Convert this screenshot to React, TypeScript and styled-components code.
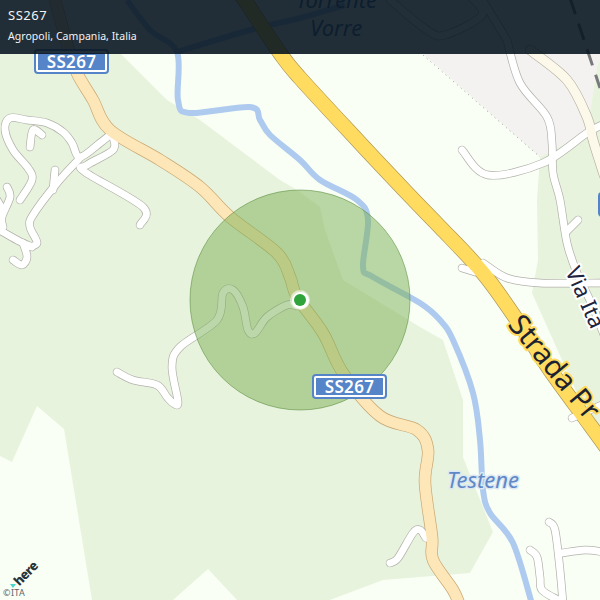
import React from 'react'
import styled, { createGlobalStyle } from 'styled-components'

type Pt = [number, number]

const GlobalStyle = createGlobalStyle`
  html, body {
    margin: 0;
    padding: 0;
    background: #f9fff5;
  }
`

const Viewport = styled.div`
  position: relative;
  width: 600px;
  height: 600px;
  overflow: hidden;
  background: #f9fff5;
  font-family: "Noto Sans", "Liberation Sans", sans-serif;
`

const MapCanvas = styled.svg`
  position: absolute;
  inset: 0;
  display: block;
`

const Casing = styled.path<{ $w: number; $color?: string }>`
  fill: none;
  stroke: ${p => p.$color || '#b2b1ab'};
  stroke-width: ${p => p.$w + 1.4}px;
  stroke-linecap: round;
  stroke-linejoin: round;
`

const Fill = styled.path<{ $w: number; $color?: string }>`
  fill: none;
  stroke: ${p => p.$color || '#ffffff'};
  stroke-width: ${p => p.$w}px;
  stroke-linecap: round;
  stroke-linejoin: round;
`

const Land = styled.polygon<{ $color: string }>`
  fill: ${p => p.$color};
`

const River = styled.path`
  fill: none;
  stroke: #aecbef;
  stroke-width: 6px;
  stroke-linejoin: round;
`

const Rail = styled.path`
  fill: none;
  stroke: #77797a;
  stroke-width: 3px;
  stroke-dasharray: 17 10;
`

const AreaEdge = styled.path`
  fill: none;
  stroke: #9a9a98;
  stroke-width: 1px;
  stroke-dasharray: 1 4;
`

const Radius = styled.circle`
  fill: rgba(122, 176, 84, 0.5);
  stroke: rgba(88, 138, 60, 0.55);
  stroke-width: 1px;
`

const RoadLabel = styled.text<{ $size: number; $halo: string; $color: string }>`
  font-family: "Noto Sans", "Liberation Sans", sans-serif;
  font-size: ${p => p.$size}px;
  fill: ${p => p.$color};
  stroke: ${p => p.$halo};
  stroke-width: 4px;
  stroke-linejoin: round;
  paint-order: stroke;
`

const WaterLabel = styled.text<{ $color: string; $halo: string }>`
  font-family: "Noto Sans", "Liberation Sans", sans-serif;
  font-size: 22px;
  font-style: italic;
  fill: ${p => p.$color};
  stroke: ${p => p.$halo};
  stroke-width: 3px;
  stroke-linejoin: round;
  paint-order: stroke;
`

const Shield = styled.div<{ $x: number; $y: number }>`
  position: absolute;
  left: ${p => p.$x}px;
  top: ${p => p.$y}px;
  width: 75px;
  height: 25px;
  box-sizing: border-box;
  padding: 2px;
  background: #5585c8;
  border-radius: 4px;
`

const ShieldInner = styled.div`
  height: 100%;
  box-sizing: border-box;
  border: 2px solid #ffffff;
  border-radius: 2px;
  background: #5585c8;
  color: #ffffff;
  display: flex;
  align-items: center;
  justify-content: center;
  font-size: 17px;
  font-weight: 600;
  letter-spacing: 0.3px;
`

const Marker = styled.div`
  position: absolute;
  left: 290px;
  top: 290px;
  width: 20px;
  height: 20px;
  border-radius: 50%;
  background: rgba(255, 255, 255, 0.55);
  display: flex;
  align-items: center;
  justify-content: center;
`

const MarkerRing = styled.div`
  width: 17px;
  height: 17px;
  border-radius: 50%;
  background: #ffffff;
  display: flex;
  align-items: center;
  justify-content: center;
`

const MarkerDot = styled.div`
  width: 12px;
  height: 12px;
  border-radius: 50%;
  background: #2ea43a;
`

const Header = styled.header`
  position: absolute;
  left: 0;
  top: 0;
  right: 0;
  height: 54px;
  box-sizing: border-box;
  padding: 6px 8px 0;
  background: rgba(7, 20, 31, 0.89);
  color: #f2f4f5;
  display: flex;
  flex-direction: column;
  gap: 5px;
`

const Title = styled.div`
  font-size: 13px;
  line-height: 18px;
  letter-spacing: 0.5px;
`

const Subtitle = styled.div`
  font-size: 10.5px;
  line-height: 14px;
  letter-spacing: 0.05px;
`

const Attribution = styled.div`
  position: absolute;
  left: 3px;
  bottom: 2px;
  display: flex;
  flex-direction: column;
  align-items: flex-start;
`

const HereLogo = styled.div`
  position: relative;
  margin: 0 0 0 8px;
  height: 22px;
  width: 26px;
`

const HereMark = styled.span`
  position: absolute;
  left: -1px;
  bottom: 0;
  width: 0;
  height: 0;
  border-left: 3px solid transparent;
  border-right: 3px solid transparent;
  border-top: 4px solid #48d8c8;
`

const HereWord = styled.span`
  position: absolute;
  left: 1px;
  top: 0;
  font-size: 13px;
  line-height: 15px;
  font-weight: 800;
  letter-spacing: -0.6px;
  color: #26343a;
  transform: rotate(-45deg);
`

const Copyright = styled.div`
  font-size: 9px;
  line-height: 10px;
  letter-spacing: 0.4px;
  color: #5c6468;
`

// catmull-rom through the points, so roads bend instead of kinking
const smooth = (pts: Pt[]) => {
  let d = `M${pts[0][0]} ${pts[0][1]}`
  for (let i = 0; i < pts.length - 1; i++) {
    const p0 = pts[Math.max(i - 1, 0)]
    const p1 = pts[i]
    const p2 = pts[i + 1]
    const p3 = pts[Math.min(i + 2, pts.length - 1)]
    const c1x = p1[0] + (p2[0] - p0[0]) / 6
    const c1y = p1[1] + (p2[1] - p0[1]) / 6
    const c2x = p2[0] - (p3[0] - p1[0]) / 6
    const c2y = p2[1] - (p3[1] - p1[1]) / 6
    d += ` C${c1x.toFixed(1)} ${c1y.toFixed(1)} ${c2x.toFixed(1)} ${c2y.toFixed(1)} ${p2[0]} ${p2[1]}`
  }
  return d
}

const minorRoads: Pt[][] = [
  [[20, 200], [32, 180], [28, 168], [13, 150], [5, 130], [10, 118], [27, 120], [47, 123], [63, 132], [72, 143], [80, 157], [100, 143], [110, 135]],
  [[30, 147], [33, 130], [42, 135]],
  [[80, 158], [57, 183], [33, 215], [30, 227], [37, 243], [27, 247]],
  [[55, 170], [53, 190]],
  [[-4, 228], [17, 240], [32, 247]],
  [[23, 243], [27, 257], [22, 265], [13, 260]],
  [[7, 187], [10, 197], [2, 217], [3, 227]],
  [[-3, 200], [3, 210]],
  [[113, 137], [113, 150], [87, 165], [85, 172], [143, 207], [140, 225]],
  [[117, 372], [133, 380], [157, 385], [167, 397], [173, 403], [178, 402], [172, 367], [180, 347], [217, 320], [223, 293], [233, 290], [243, 307], [248, 330], [255, 333], [267, 317], [287, 305], [296, 306]],
  [[507, 40], [520, 83], [547, 117], [552, 143], [553, 173], [560, 200], [567, 243], [577, 273], [593, 307], [607, 343]],
  [[462, 150], [488, 175], [543, 163], [587, 133], [604, 124]],
  [[462, 268], [475, 272]],
  [[483, 263], [507, 278], [540, 283], [604, 283]],
  [[566, 232], [578, 220]],
  [[572, 418], [590, 410], [604, 404]],
  [[390, 563], [398, 558], [413, 533], [420, 530], [426, 538]],
  [[549, 522], [555, 530], [560, 570], [563, 604]],
  [[562, 553], [585, 550], [604, 552]],
  [[530, 550], [537, 557], [540, 577], [542, 590], [558, 600]],
  [[390, 0], [427, 30], [445, 35], [482, 15], [470, -4]],
  [[480, -4], [507, 40]],
]

const cream: Pt[] = [[55, 0], [70, 54], [78, 75], [93, 100], [110, 130], [160, 160], [200, 187], [230, 217], [277, 253], [290, 277], [297, 297], [323, 333], [343, 373], [380, 416], [417, 430], [428, 450], [425, 483], [432, 537], [433, 560], [453, 590], [460, 606]]
const motorway: Pt[] = [[242, -4], [280, 53], [300, 78], [360, 143], [410, 196], [440, 227], [483, 273], [517, 320], [550, 370], [590, 425], [612, 455]]
const secondary: Pt[] = [[530, 50], [567, 80], [587, 117], [593, 140], [604, 175]]

const App = () => {
  return (
    <Viewport>
      <GlobalStyle />
      <MapCanvas width={600} height={600} viewBox="0 0 600 600">
        <Land $color="#f3f2f0" points="423,54 540,157 587,132 597,67 600,60 600,0 423,0" />
        <Land $color="#e8f3dd" points="0,54 120,53 167,100 200,120 280,180 297,190 320,207 325,230 343,280 420,327 443,340 463,400 463,457 493,532 470,573 383,580 330,600 237,600 208,569 173,600 92,600 64,429 37,406 12,462 0,456" />
        <Land $color="#e8f3dd" points="540,157 537,200 538,260 532,293 580,400 600,430 600,60 597,67 587,132" />
        <AreaEdge d="M423 55L540 157" />
        <Rail d="M570 -2L600 88" />

        <River d={smooth([[127, 0], [150, 30], [177, 52], [178, 100], [190, 113], [250, 107], [260, 120], [270, 135], [300, 160], [320, 180], [357, 200], [368, 220], [363, 267], [373, 277], [420, 303], [440, 320], [453, 340], [473, 393], [480, 440], [483, 490], [490, 513], [513, 543], [532, 604]])} />
        <River d={smooth([[177, 52], [250, 30], [300, 18], [345, 5]])} />

        {minorRoads.map((r, i) => <Casing key={i} $w={7} d={smooth(r)} />)}
        <Casing $w={11} $color="#c8a873" d={smooth(cream)} />
        <Casing $w={9} $color="#b8b4a4" d={smooth(secondary)} />
        <Casing $w={14} $color="#b0975a" d={smooth(motorway)} />
        {minorRoads.map((r, i) => <Fill key={i} $w={7} d={smooth(r)} />)}
        <Fill $w={11} $color="#fde6b8" d={smooth(cream)} />
        <Fill $w={9} $color="#fdf9ea" d={smooth(secondary)} />
        <Fill $w={14} $color="#ffdc60" d={smooth(motorway)} />

        <RoadLabel $size={29} $color="#1d2230" $halo="#ffdc60" transform="translate(507 325) rotate(50.5)">Strada Pr</RoadLabel>
        <RoadLabel $size={22} $color="#1c2440" $halo="#ffffff" transform="translate(565 271) rotate(66)">Via Ita</RoadLabel>
        <WaterLabel $color="#6088c6" $halo="#dce8f2" x={447} y={488}>Testene</WaterLabel>
        <WaterLabel $color="#3f6aa8" $halo="none" x={296} y={8}>Torrente</WaterLabel>
        <WaterLabel $color="#3f6aa8" $halo="none" x={310} y={36}>Vorre</WaterLabel>

        <Radius cx={300} cy={300} r={110} />
      </MapCanvas>

      <Shield $x={34} $y={49}><ShieldInner>SS267</ShieldInner></Shield>
      <Shield $x={312} $y={374}><ShieldInner>SS267</ShieldInner></Shield>
      <Shield $x={598} $y={192}><ShieldInner /></Shield>

      <Marker>
        <MarkerRing>
          <MarkerDot />
        </MarkerRing>
      </Marker>

      <Header>
        <Title>SS267</Title>
        <Subtitle>Agropoli, Campania, Italia</Subtitle>
      </Header>

      <Attribution>
        <HereLogo>
          <HereMark />
          <HereWord>here</HereWord>
        </HereLogo>
        <Copyright>©ITA</Copyright>
      </Attribution>
    </Viewport>
  )
}

export default App
